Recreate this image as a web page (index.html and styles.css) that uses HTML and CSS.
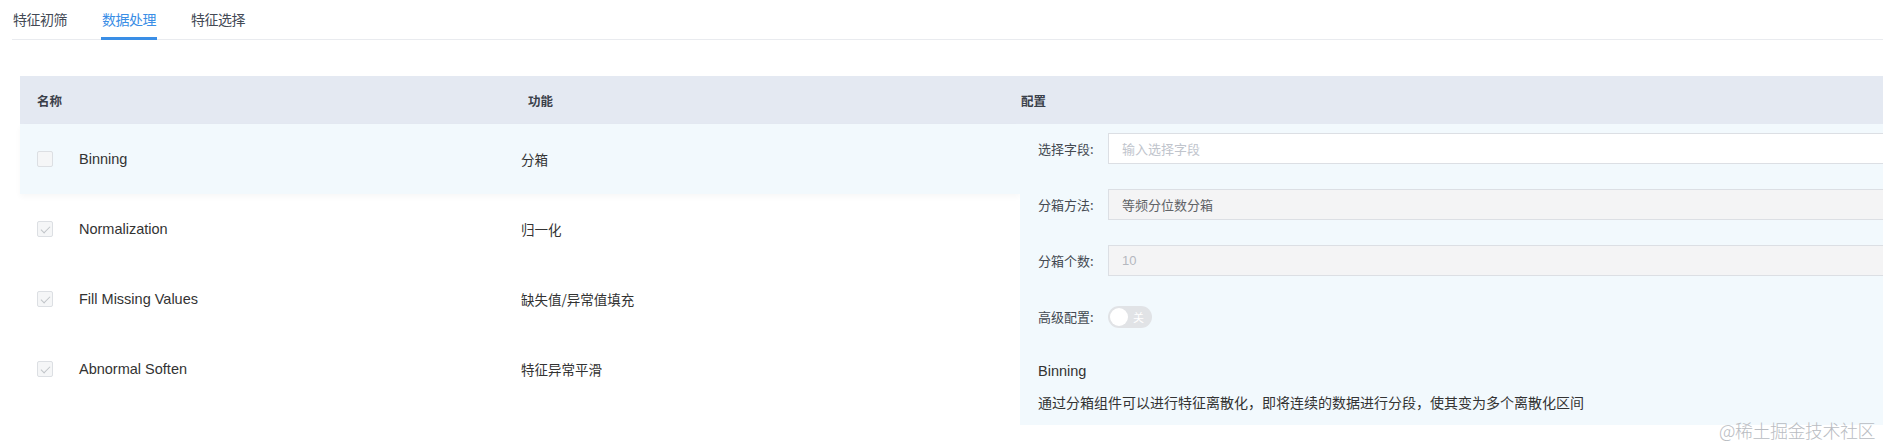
FILE: index.html
```html
<!DOCTYPE html>
<html lang="zh">
<head>
<meta charset="utf-8">
<title>数据处理</title>
<link rel="stylesheet" href="styles.css">
</head>
<body>
<div class="page">
  <div class="tabs">
    <div class="tab">特征初筛</div>
    <div class="tab active">数据处理</div>
    <div class="tab">特征选择</div>
  </div>

  <div class="table">
    <div class="left">
      <div class="head">
        <div class="c-name">名称</div>
        <div class="c-func">功能</div>
      </div>
      <div class="row hl">
        <div class="c-name"><span class="cb"></span><span class="nm">Binning</span></div>
        <div class="c-func">分箱</div>
      </div>
      <div class="row">
        <div class="c-name"><span class="cb checked"></span><span class="nm">Normalization</span></div>
        <div class="c-func">归一化</div>
      </div>
      <div class="row">
        <div class="c-name"><span class="cb checked"></span><span class="nm">Fill Missing Values</span></div>
        <div class="c-func">缺失值/异常值填充</div>
      </div>
      <div class="row">
        <div class="c-name"><span class="cb checked"></span><span class="nm">Abnormal Soften</span></div>
        <div class="c-func">特征异常平滑</div>
      </div>
    </div>
    <div class="right">
      <div class="head"><div class="c-conf">配置</div></div>
      <div class="panel">
        <div class="item">
          <label class="lbl">选择字段:</label>
          <div class="input"><span class="ph">输入选择字段</span></div>
        </div>
        <div class="item">
          <label class="lbl">分箱方法:</label>
          <div class="input dis"><span class="val">等频分位数分箱</span></div>
        </div>
        <div class="item">
          <label class="lbl">分箱个数:</label>
          <div class="input dis"><span class="num">10</span></div>
        </div>
        <div class="item sw-item">
          <label class="lbl">高级配置:</label>
          <div class="switch"><span class="knob"></span><span class="sw-txt">关</span></div>
        </div>
        <div class="desc-title">Binning</div>
        <div class="desc">通过分箱组件可以进行特征离散化，即将连续的数据进行分段，使其变为多个离散化区间</div>
      </div>
    </div>
  </div>
</div>
<div class="watermark">@稀土掘金技术社区</div>
</body>
</html>
```

FILE: styles.css
```css
html, body {
  margin: 0;
  padding: 0;
  background: #ffffff;
  overflow: hidden;
}
body {
  font-family: "Liberation Sans", "Noto Sans CJK SC", sans-serif;
  color: #333333;
  font-size: 14px;
  width: 1883px;
  height: 445px;
  position: relative;
}
.page {
  width: 1960px;
}
.tabs {
  display: flex;
  gap: 33px;
  margin-left: 12px;
  height: 40px;
  border-bottom: 1px solid #e9ebef;
  box-sizing: border-box;
}
.tab {
  font-family: "Noto Sans CJK SC", sans-serif;
  font-size: 14px;
  line-height: 20px;
  padding-top: 9px;
  height: 40px;
  box-sizing: border-box;
  color: #444a55;
  width: 56px;
  text-align: center;
  letter-spacing: -0.5px;
}
.tab.active {
  color: #3a8ee6;
  border-bottom: 3px solid #3a8ee6;
}
.table {
  display: flex;
  margin-top: 36px;
  margin-left: 20px;
}
.left {
  width: 1000px;
}
.right {
  flex: 1;
}
.head {
  display: flex;
  align-items: center;
  height: 48px;
  background: #e4e9f2;
  font-family: "Noto Sans CJK SC", sans-serif;
  font-size: 12.5px;
  font-weight: 700;
  color: #3a404a;
}
.head .c-name { width: 485px; padding-left: 17px; box-sizing: border-box; }
.head .c-func { padding-left: 23px; }
.head .c-conf { padding-left: 1px; }
.row {
  display: flex;
  align-items: center;
  height: 70px;
}
.row.hl {
  background: #f2f9fd;
  box-shadow: 0 3px 6px rgba(0, 0, 0, 0.03);
}
.row .c-name {
  width: 485px;
  padding-left: 17px;
  box-sizing: border-box;
  display: flex;
  align-items: center;
}
.row .c-func {
  padding-left: 16px;
  font-family: "Noto Sans CJK SC", sans-serif;
  font-size: 13.5px;
  color: #333333;
}
.cb {
  width: 16px;
  height: 16px;
  box-sizing: border-box;
  border: 1px solid #dcdfe3;
  border-radius: 2px;
  background: #f5f6f7;
  position: relative;
  flex: none;
}
.cb.checked::after {
  content: "";
  position: absolute;
  left: 4.5px;
  top: 2px;
  width: 4px;
  height: 8px;
  border-right: 1.5px solid #c0c4c8;
  border-bottom: 1.5px solid #c0c4c8;
  transform: rotate(45deg);
}
.nm {
  margin-left: 26px;
  font-size: 14.5px;
  color: #333333;
}
.panel {
  background: #f2f9fd;
  height: 301px;
  box-sizing: border-box;
  padding: 9px 0 0 18px;
}
.item {
  display: flex;
  align-items: center;
  height: 31px;
  margin-bottom: 25px;
}
.sw-item {
  margin-bottom: 28px;
}
.lbl {
  width: 70px;
  font-family: "Noto Sans CJK SC", sans-serif;
  font-size: 13px;
  color: #444a52;
  flex: none;
}
.input {
  flex: 1;
  height: 31px;
  box-sizing: border-box;
  border: 1px solid #dcdfe4;
  border-right: none;
  background: #ffffff;
  display: flex;
  align-items: center;
  padding-left: 13px;
  font-family: "Noto Sans CJK SC", sans-serif;
  font-size: 13px;
}
.input.dis {
  background: #f4f4f5;
}
.ph { color: #c0c4cc; }
.val { color: #606266; }
.num { color: #b4b8bf; font-family: "Liberation Sans", sans-serif; }
.switch {
  width: 44px;
  height: 22px;
  border-radius: 11px;
  background: #e1e3e6;
  position: relative;
  flex: none;
}
.knob {
  position: absolute;
  left: 2px;
  top: 2px;
  width: 18px;
  height: 18px;
  border-radius: 50%;
  background: #ffffff;
}
.sw-txt {
  position: absolute;
  right: 8px;
  top: 3px;
  font-family: "Noto Sans CJK SC", sans-serif;
  font-size: 11px;
  line-height: 16px;
  color: #ffffff;
}
.desc-title {
  font-size: 14.5px;
  line-height: 22px;
  color: #333333;
}
.desc {
  margin-top: 9px;
  font-family: "Noto Sans CJK SC", sans-serif;
  font-size: 14px;
  line-height: 22px;
  color: #333333;
  letter-spacing: 0;
}
.watermark {
  position: absolute;
  right: 8px;
  top: 420px;
  font-family: "Noto Sans CJK SC", sans-serif;
  font-size: 18px;
  line-height: 20px;
  color: #b9bcc2;
  font-weight: 300;
  letter-spacing: -0.5px;
}
```
